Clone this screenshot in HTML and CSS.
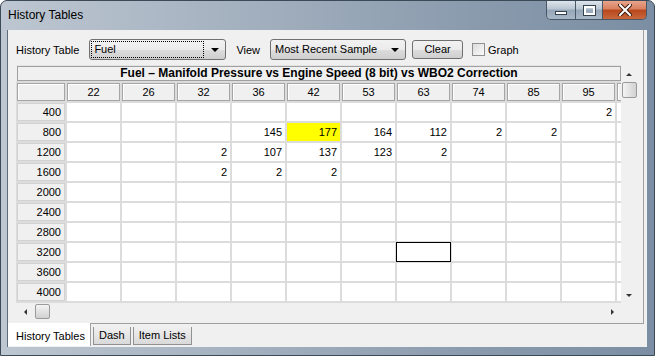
FILE: index.html
```html
<!DOCTYPE html>
<html lang="en">
<head>
  <meta charset="UTF-8">
  <title>History Tables</title>
  <link rel="stylesheet" href="styles.css">
</head>
<body>
  <div class="window">
    <div class="titlebar">
      <span class="title-text">History Tables</span>
      <div class="caption">
        <div class="cap-btn cap-min"><span class="min-bar"></span></div>
        <div class="cap-btn cap-max"><span class="max-box"></span></div>
        <div class="cap-btn cap-close">
          <svg width="14" height="12" viewBox="0 0 14 12">
            <path d="M2 1 L12 11 M12 1 L2 11" stroke="#3a1a10" stroke-width="4" stroke-linecap="square"/>
            <path d="M2 1 L12 11 M12 1 L2 11" stroke="#fff" stroke-width="2" stroke-linecap="square"/>
          </svg>
        </div>
      </div>
    </div>

    <div class="client">
      <div class="page">
        <div class="toolbar">
          <span class="lbl">History Table</span>
          <div class="combo combo-fuel">
            <span class="combo-text focus">Fuel</span>
            <span class="arrow-down"></span>
          </div>
          <span class="lbl lbl-view">View</span>
          <div class="combo combo-view">
            <span class="combo-text">Most Recent Sample</span>
            <span class="arrow-down"></span>
          </div>
          <div class="button">Clear</div>
          <span class="checkbox"></span>
          <span class="lbl lbl-graph">Graph</span>
        </div>

        <div class="grid-area">
          <div class="viewport">
            <div class="grid-title">Fuel &ndash; Manifold Pressure vs Engine Speed (8 bit) vs WBO2 Correction</div>
            <table class="grid">
              <tr>
                <th class="corner"></th>
                <th>22</th><th>26</th><th>32</th><th>36</th><th>42</th><th>53</th><th>63</th><th>74</th><th>85</th><th>95</th><th></th>
              </tr>
              <tr><th class="rh">400</th><td></td><td></td><td></td><td></td><td></td><td></td><td></td><td></td><td></td><td>2</td><td></td></tr>
              <tr><th class="rh">800</th><td></td><td></td><td></td><td>145</td><td class="hot">177</td><td>164</td><td>112</td><td>2</td><td>2</td><td></td><td></td></tr>
              <tr><th class="rh">1200</th><td></td><td></td><td>2</td><td>107</td><td>137</td><td>123</td><td>2</td><td></td><td></td><td></td><td></td></tr>
              <tr><th class="rh">1600</th><td></td><td></td><td>2</td><td>2</td><td>2</td><td></td><td></td><td></td><td></td><td></td><td></td></tr>
              <tr><th class="rh">2000</th><td></td><td></td><td></td><td></td><td></td><td></td><td></td><td></td><td></td><td></td><td></td></tr>
              <tr><th class="rh">2400</th><td></td><td></td><td></td><td></td><td></td><td></td><td></td><td></td><td></td><td></td><td></td></tr>
              <tr><th class="rh">2800</th><td></td><td></td><td></td><td></td><td></td><td></td><td></td><td></td><td></td><td></td><td></td></tr>
              <tr><th class="rh">3200</th><td></td><td></td><td></td><td></td><td></td><td></td><td class="sel"></td><td></td><td></td><td></td><td></td></tr>
              <tr><th class="rh">3600</th><td></td><td></td><td></td><td></td><td></td><td></td><td></td><td></td><td></td><td></td><td></td></tr>
              <tr><th class="rh">4000</th><td></td><td></td><td></td><td></td><td></td><td></td><td></td><td></td><td></td><td></td><td></td></tr>
              <tr><th class="rh"></th><td></td><td></td><td></td><td></td><td></td><td></td><td></td><td></td><td></td><td></td><td></td></tr>
            </table>
          </div>
          <div class="vscroll">
            <span class="arrow-up"></span>
            <span class="vthumb"></span>
            <span class="vspace"></span>
            <span class="arrow-down small"></span>
          </div>
          <div class="hscroll">
            <span class="arrow-left"></span>
            <span class="hthumb"></span>
            <span class="hspace"></span>
            <span class="arrow-right"></span>
          </div>
          <div class="scroll-corner"></div>
        </div>
      </div>

      <div class="tabs">
        <div class="tab active">History Tables</div>
        <div class="tab">Dash</div>
        <div class="tab">Item Lists</div>
      </div>
    </div>
  </div>
</body>
</html>
```

FILE: styles.css
```css
body {
  margin: 0;
  width: 655px;
  height: 356px;
  overflow: hidden;
  font-family: "Liberation Sans", Arial, sans-serif;
  font-size: 11px;
  color: #000;
}
.window {
  width: 655px;
  height: 356px;
  box-sizing: border-box;
  border: 1px solid #3c4a58;
  border-radius: 7px 7px 0 0;
  background: linear-gradient(to right, rgba(255, 255, 255, 0.5), rgba(255, 255, 255, 0.1) 75%, rgba(255, 255, 255, 0) 100%), #7b8ea3;
  display: flex;
  flex-direction: column;
}
.titlebar {
  height: 29px;
  display: flex;
  align-items: flex-start;
  padding-left: 7px;
}
.title-text {
  font-size: 12px;
  line-height: 28px;
  color: #000;
}
.caption {
  margin-left: auto;
  margin-right: 7px;
  display: flex;
  border: 1px solid #4a5866;
  border-top: none;
  border-radius: 0 0 5px 5px;
  overflow: hidden;
}
.cap-btn {
  height: 18px;
  display: flex;
  align-items: center;
  justify-content: center;
  background: linear-gradient(#dde4ec, #b9c5d2 45%, #95a6b8 50%, #a9b8c8);
}
.cap-min {
  width: 28px;
  border-right: 1px solid #4a5866;
}
.cap-max {
  width: 26px;
  border-right: 1px solid #4a5866;
}
.cap-close {
  width: 43px;
  background: linear-gradient(#e8a48c, #d9805e 45%, #b8471c 50%, #c9683c);
}
.min-bar {
  width: 10px;
  height: 2px;
  margin-top: 6px;
  background: #fff;
  border: 1px solid #35414d;
}
.max-box {
  width: 7px;
  height: 5px;
  border: 2px solid #fff;
  outline: 1px solid #35414d;
}
.client {
  margin: 0 7px 8px 7px;
  flex: 1;
  background: #f0f0f0;
  display: flex;
  flex-direction: column;
  box-shadow: -1px 0 0 #5d6c7b;
}
.page {
  height: 294px;
  box-sizing: border-box;
  margin-right: 3px;
  padding: 9px 0 0 8px;
  border-right: 1px solid #a0a0a0;
  border-bottom: 1px solid #a0a0a0;
}
.toolbar {
  display: flex;
  align-items: center;
  height: 21px;
}
.lbl {
  margin-right: 10px;
}
.lbl-view {
  margin-left: 10px;
}
.lbl-graph {
  margin-left: 3px;
}
.combo {
  height: 21px;
  box-sizing: border-box;
  border: 1px solid #707070;
  border-radius: 3px;
  background: linear-gradient(#f2f2f2, #ebebeb 50%, #dddddd 51%, #cfcfcf);
  display: flex;
  align-items: center;
  padding: 0 6px 0 2px;
}
.combo-fuel {
  width: 137px;
}
.combo-view {
  width: 136px;
}
.combo-text {
  flex: 1;
  padding: 1px 2px;
  line-height: 13px;
}
.combo-text.focus {
  outline: 1px dotted #000;
  margin-right: 8px;
}
.arrow-down {
  width: 0;
  height: 0;
  border-left: 4px solid transparent;
  border-right: 4px solid transparent;
  border-top: 4px solid #000;
}
.arrow-down.small {
  border-left-width: 3px;
  border-right-width: 3px;
  border-top: 3px solid #333;
}
.button {
  width: 51px;
  height: 19px;
  box-sizing: border-box;
  margin-left: 6px;
  border: 1px solid #707070;
  border-radius: 3px;
  background: linear-gradient(#f2f2f2, #ebebeb 50%, #dddddd 51%, #cfcfcf);
  text-align: center;
  line-height: 17px;
}
.checkbox {
  width: 13px;
  height: 13px;
  box-sizing: border-box;
  margin-left: 9px;
  border: 1px solid #8f8f8f;
  background: linear-gradient(135deg, #dcdcdc, #fbfbfb);
}
.grid-area {
  margin-top: 5px;
  width: 621px;
  display: grid;
  grid-template-columns: 605px 16px;
  grid-template-rows: 238px 17px;
  background: #f0f0f0;
}
.viewport {
  overflow: hidden;
  border-top: 1px solid #e3e3e3;
  box-sizing: border-box;
}
.grid-title {
  margin: 0 0 0 1px;
  height: 15px;
  box-sizing: border-box;
  border: 1px solid #a0a0a0;
  background: #f0f0f0;
  text-align: center;
  font-weight: bold;
  font-size: 12px;
  line-height: 13px;
}
.grid {
  margin-left: -1px;
  border-spacing: 2px;
  table-layout: fixed;
  width: 657px;
  background: #dcdcdc;
}
.grid tr {
  height: 18px;
}
.grid th,
.grid td {
  padding: 0;
  font-weight: normal;
  font-size: 11px;
  line-height: 16px;
}
.grid th {
  width: 51px;
  background: #f0f0f0;
  border: 1px solid #a5a5a5;
  box-shadow: inset 1px 1px 0 #fff;
  text-align: center;
}
.grid th.corner {
  width: 46px;
}
.grid th.rh {
  text-align: right;
  padding-right: 3px;
  border-color: #d2d2d2;
  box-shadow: none;
}
.grid td {
  background: #fff;
  text-align: right;
  padding-right: 3px;
}
.grid td.hot {
  background: #ffff00;
}
.grid td.sel {
  outline: 1px solid #000;
}
.vscroll {
  display: flex;
  flex-direction: column;
  align-items: center;
  padding: 8px 0 6px;
  box-sizing: border-box;
}
.arrow-up {
  width: 0;
  height: 0;
  border-left: 3px solid transparent;
  border-right: 3px solid transparent;
  border-bottom: 3px solid #333;
}
.vthumb {
  margin-top: 6px;
  width: 15px;
  height: 16px;
  box-sizing: border-box;
  border: 1px solid #9a9a9a;
  border-radius: 2px;
  background: linear-gradient(to right, #f4f4f4, #e2e2e2 50%, #d2d2d2);
}
.vspace {
  flex: 1;
}
.hscroll {
  display: flex;
  align-items: center;
  padding: 0 7px 0 8px;
  box-sizing: border-box;
}
.arrow-left {
  width: 0;
  height: 0;
  border-top: 3px solid transparent;
  border-bottom: 3px solid transparent;
  border-right: 3px solid #333;
}
.arrow-right {
  width: 0;
  height: 0;
  border-top: 3px solid transparent;
  border-bottom: 3px solid transparent;
  border-left: 3px solid #333;
}
.hthumb {
  margin-left: 8px;
  width: 15px;
  height: 15px;
  box-sizing: border-box;
  border: 1px solid #9a9a9a;
  border-radius: 2px;
  background: linear-gradient(#f4f4f4, #e2e2e2 50%, #d2d2d2);
}
.hspace {
  flex: 1;
}
.tabs {
  display: flex;
  align-items: flex-start;
  height: 23px;
}
.tab {
  margin-top: 3px;
  height: 18px;
  box-sizing: border-box;
  padding: 0 5px;
  margin-left: 2px;
  border: 1px solid #919191;
  border-top: none;
  background: linear-gradient(#f0f0f0, #e5e5e5 50%, #d9d9d9);
  line-height: 16px;
}
.tab.active {
  margin: -1px 0 0 0;
  height: 23px;
  width: 83px;
  border: none;
  border-right: 1px solid #a0a0a0;
  background: #fff;
  padding: 0 0 0 8px;
  line-height: 27px;
}
```
